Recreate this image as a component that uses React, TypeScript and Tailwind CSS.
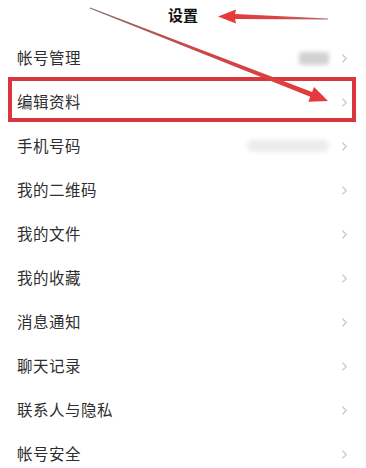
const rows = [
  "帐号管理",
  "编辑资料",
  "手机号码",
  "我的二维码",
  "我的文件",
  "我的收藏",
  "消息通知",
  "聊天记录",
  "联系人与隐私",
  "帐号安全",
];

function Chevron() {
  return (
    <svg width="7" height="11" viewBox="0 0 7 11" fill="none">
      <path d="M1.8 2 L5.2 5.5 L1.8 9" stroke="#c8c8c8" strokeWidth="1.2" strokeLinecap="round" strokeLinejoin="round" />
    </svg>
  );
}

export default function App() {
  return (
    <div
      className="relative w-[366px] h-[468px] overflow-hidden bg-white"
      style={{ fontFamily: '"Noto Sans CJK SC", "Noto Sans", sans-serif' }}
    >
      <div className="h-[36px] flex items-start justify-center pt-[4px]">
        <span className="text-[15px] font-bold text-[#111]">设置</span>
      </div>

      <div className="flex flex-col">
        {rows.map((label, i) => (
          <div key={label} className="h-[44px] flex items-center justify-between pl-[17px] pr-[18px]">
            <span className="text-[15.5px] text-[#2e2e2e] tracking-[0.5px]">{label}</span>
            <div className="flex items-center gap-[12px]">
              {i === 0 && (
                <div className="w-[30px] h-[13px] rounded-[3px] bg-[#d2d2d2] blur-[2px]" />
              )}
              {i === 2 && (
                <div className="w-[82px] h-[12px] rounded-full bg-[#ececec] blur-[2px]" />
              )}
              <Chevron />
            </div>
          </div>
        ))}
      </div>

      {/* annotation box */}
      <div className="absolute left-[8px] top-[77px] w-[348px] h-[45px] border-4 border-[#d9363e]" />

      {/* annotation arrows */}
      <svg className="absolute left-0 top-0" width="366" height="468" viewBox="0 0 366 468">
        <defs>
          <linearGradient id="a1" x1="90" y1="8" x2="328" y2="101" gradientUnits="userSpaceOnUse">
            <stop offset="0" stopColor="#8a6a6a" />
            <stop offset="0.4" stopColor="#c84a4a" />
            <stop offset="1" stopColor="#e8383a" />
          </linearGradient>
          <linearGradient id="a2" x1="328" y1="19" x2="218" y2="16" gradientUnits="userSpaceOnUse">
            <stop offset="0" stopColor="#b46a6a" />
            <stop offset="0.5" stopColor="#d94545" />
            <stop offset="1" stopColor="#e8383a" />
          </linearGradient>
        </defs>
        <polygon
          points="90.2,7.5 312.1,92.1 314.1,87 328,101 308.3,101.8 310.3,96.7 89.8,8.5"
          fill="url(#a1)"
        />
        <polygon
          points="328,18.6 235,14 236,9.5 218,16.5 236,23.5 235,19 328,19.6"
          fill="url(#a2)"
        />
      </svg>
    </div>
  );
}
